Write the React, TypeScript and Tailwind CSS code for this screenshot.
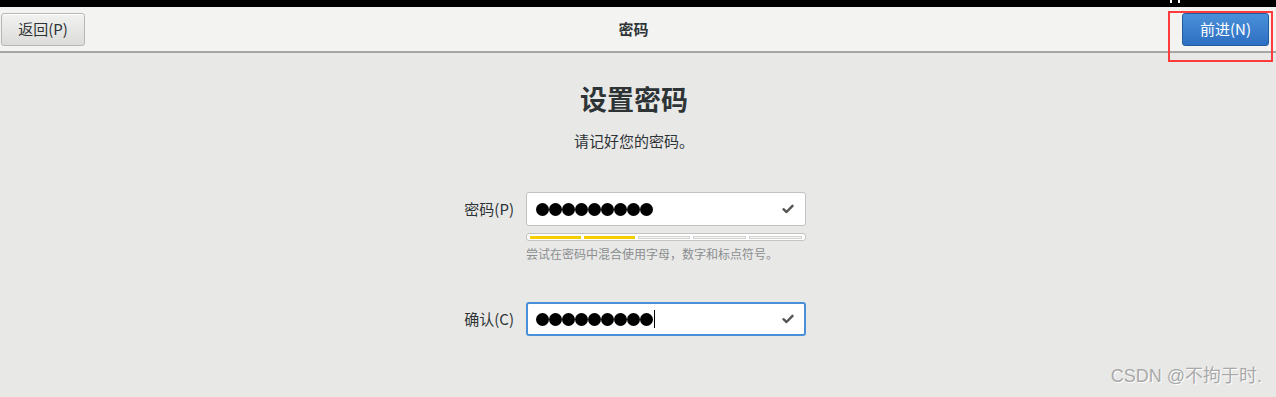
import React from 'react';

const font = { fontFamily: '"Noto Sans CJK SC", "Noto Sans", sans-serif' };

const Dots: React.FC<{ count: number }> = ({ count }) => (
    <div className="flex items-center">
        {Array.from({ length: count }).map((_, i) => (
            <span key={i} className="block w-[13px] h-[13px] rounded-full bg-black"></span>
        ))}
    </div>
);

const Check: React.FC = () => (
    <svg width="12" height="10" viewBox="0 0 12 10" className="ml-auto mr-[2px]">
        <path d="M1.5 5.2 L4.5 8 L10.5 1.8" fill="none" stroke="#555753" strokeWidth="2.4" strokeLinecap="round" strokeLinejoin="round" />
    </svg>
);

const StrengthBar: React.FC<{ level: number }> = ({ level }) => (
    <div className="mt-[7px] w-[280px] h-[8px] rounded-[3px] border border-[#c4c4c2] bg-white flex items-center gap-[3px] px-[3px]">
        {[0, 1, 2, 3, 4].map((i) => (
            <div
                key={i}
                className={`flex-1 h-[3px] ${i < level ? 'bg-[#f5ce00]' : 'border border-[#d3d3d1] bg-[#f6f6f5]'}`}
            ></div>
        ))}
    </div>
);

export default function App() {
    return (
        <div className="relative w-[1276px] h-[397px] bg-[#e8e8e7] overflow-hidden flex flex-col" style={font}>
            <div className="h-[7px] bg-black flex justify-end pr-[96px] gap-[6px]">
                <span className="block w-[2px] h-[3px] bg-white"></span>
                <span className="block w-[2px] h-[3px] bg-white"></span>
            </div>

            <header className="h-[46px] bg-[#f3f3f2] border-b-2 border-[#a6a6a4] flex items-start justify-between pt-[6px] pl-[1px] pr-[7px]">
                <button className="w-[84px] h-[33px] rounded-[3px] border border-[#b6b6b3] bg-gradient-to-b from-[#f2f2f1] to-[#dcdcda] text-[15px] text-[#2e3436] shadow-[inset_0_1px_0_#fff]">
                    返回(P)
                </button>
                <div className="self-center -mt-[6px] text-[15px] font-bold text-[#2e3436]">密码</div>
                <button className="w-[87px] h-[33px] rounded-[3px] border border-[#215d9c] bg-gradient-to-b from-[#4a90d9] to-[#2d6fc2] text-[15px] text-white">
                    前进(N)
                </button>
            </header>

            <main className="flex flex-col items-center pt-[29px] pr-[8px]">
                <h1 className="text-[27px] leading-[34px] font-bold text-[#2e3436]">设置密码</h1>
                <p className="mt-[15px] text-[15px] leading-[20px] text-[#2e3436]">请记好您的密码。</p>
            </main>

            <section className="mt-[41px] flex flex-col pl-[440px]">
                <div className="flex items-start">
                    <label className="w-[86px] pr-[12px] text-right text-[15px] leading-[34px] text-[#2e3436]">密码(P)</label>
                    <div className="flex flex-col">
                        <div className="w-[280px] h-[34px] rounded-[3px] border border-[#c2c2c0] bg-white flex items-center px-[9px]">
                            <Dots count={9} />
                            <Check />
                        </div>
                        <StrengthBar level={2} />
                        <p className="mt-[5px] text-[12px] leading-[16px] text-[#8b8e8f]">尝试在密码中混合使用字母，数字和标点符号。</p>
                    </div>
                </div>

                <div className="mt-[40px] flex items-start">
                    <label className="w-[86px] pr-[12px] text-right text-[15px] leading-[34px] text-[#2e3436]">确认(C)</label>
                    <div className="w-[280px] h-[34px] rounded-[3px] border-2 border-[#4a90d9] bg-white flex items-center px-[8px]">
                        <Dots count={9} />
                        <span className="block w-[1px] h-[18px] bg-black ml-[1px]"></span>
                        <Check />
                    </div>
                </div>
            </section>

            <div className="absolute left-[1168px] top-[11px] w-[105px] h-[51px] border-2 border-[#ff3b3b] pointer-events-none"></div>

            <div
                className="absolute right-[14px] bottom-[7px] text-[18px] text-[#a9a9a9] [text-shadow:1px_1px_0_#ffffff]"
                style={{ fontFamily: '"Liberation Sans", "Noto Sans CJK SC", sans-serif' }}
            >
                CSDN @不拘于时.
            </div>
        </div>
    );
}
